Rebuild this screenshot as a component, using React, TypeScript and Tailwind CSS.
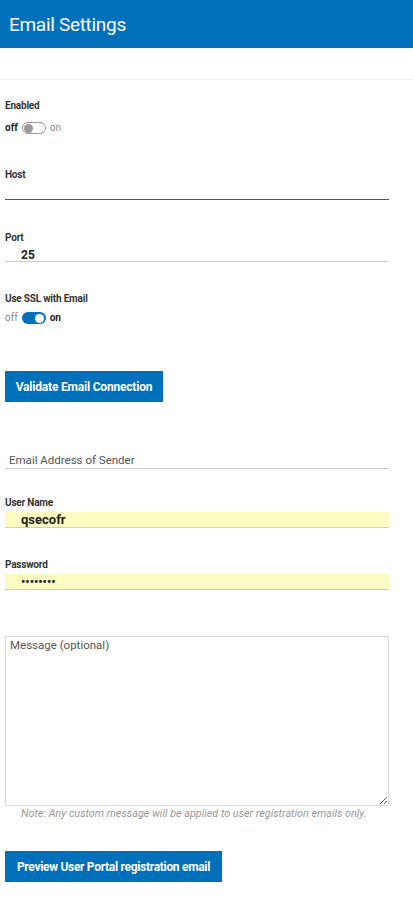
import React from "react";

const labelCls = "block text-[10px] font-bold leading-[12px] text-[#333] tracking-[-0.2px]";

const Toggle = ({ on }: { on: boolean }) => (
  <div className="flex items-center gap-[4px] text-[10px] leading-[12px]">
    <span className={on ? "text-[#888]" : "font-bold text-[#222]"}>off</span>
    {on ? (
      <span className="flex h-[12px] w-[24px] items-center justify-end rounded-full bg-[#0070bb] px-[2px]">
        <span className="h-[9px] w-[9px] rounded-full bg-white" />
      </span>
    ) : (
      <span className="flex h-[12px] w-[24px] items-center rounded-full border border-[#999] bg-white px-[1px]">
        <span className="h-[9px] w-[9px] rounded-full bg-[#999]" />
      </span>
    )}
    <span className={on ? "font-bold text-[#222]" : "text-[#888]"}>on</span>
  </div>
);

export default function App() {
  return (
    <div className="min-h-[908px] w-[413px] bg-white font-['Roboto',sans-serif] text-[#333]">
      {/* Header */}
      <div className="flex h-[48px] items-center bg-[#0070bb] pl-[9px]">
        <h1 className="text-[19px] font-normal leading-none text-white tracking-[-0.3px]">Email Settings</h1>
      </div>
      <div className="h-[32px] border-b border-[#eeeeee]" />

      <div className="w-[389px] pl-[5px]">
        {/* Enabled */}
        <div className="pt-[20px]">
          <span className={labelCls}>Enabled</span>
          <div className="mt-[10px]">
            <Toggle on={false} />
          </div>
        </div>

        {/* Host */}
        <div className="mt-[35px]">
          <span className={labelCls}>Host</span>
          <div className="mt-[6px] h-[13px] border-b border-[#0070bb]" />
        </div>

        {/* Port */}
        <div className="mt-[32px]">
          <span className={labelCls}>Port</span>
          <div className="mt-[5px] flex h-[13px] items-center border-b border-[#cccccc] pl-[16px] text-[12px] font-bold text-[#222]">
            25
          </div>
        </div>

        {/* SSL */}
        <div className="mt-[31px]">
          <span className={labelCls}>Use SSL with Email</span>
          <div className="mt-[7px]">
            <Toggle on={true} />
          </div>
        </div>

        <button className="mt-[47px] h-[31px] w-[158px] bg-[#0070bb] text-[12px] font-bold text-white tracking-[-0.2px]">
          Validate Email Connection
        </button>

        {/* Sender */}
        <div className="mt-[52px] border-b border-[#cccccc] pb-[1px] pl-[4px] text-[11.5px] leading-[13px] text-[#555]">
          Email Address of Sender
        </div>

        {/* User name */}
        <div className="mt-[28px]">
          <span className={labelCls}>User Name</span>
          <div className="mt-[3px] flex h-[16px] items-center border-b border-[#cccccc] bg-[#fafcc2] pl-[16px] text-[13px] font-bold text-[#222]">
            qsecofr
          </div>
        </div>

        {/* Password */}
        <div className="mt-[31px]">
          <span className={labelCls}>Password</span>
          <div className="mt-[3px] flex h-[16px] items-center border-b border-[#cccccc] bg-[#fafcc2] pl-[16px] text-[12px] font-bold tracking-[0px] text-[#222]">
            ••••••••
          </div>
        </div>

        {/* Message */}
        <textarea
          className="mt-[46px] block h-[170px] w-full resize-y border border-[#dddddd] px-[4px] py-[1px] text-[11.5px] leading-[14px] text-[#555] placeholder:text-[#555]"
          placeholder="Message (optional)"
        />
        <p className="mt-[1px] pl-[16px] text-[10.8px] leading-[13px] italic text-[#999]">
          Note: Any custom message will be applied to user registration emails only.
        </p>

        <button className="mt-[31px] h-[31px] w-[217px] bg-[#0070bb] text-[12px] font-bold text-white tracking-[-0.3px]">
          Preview User Portal registration email
        </button>
      </div>
    </div>
  );
}
